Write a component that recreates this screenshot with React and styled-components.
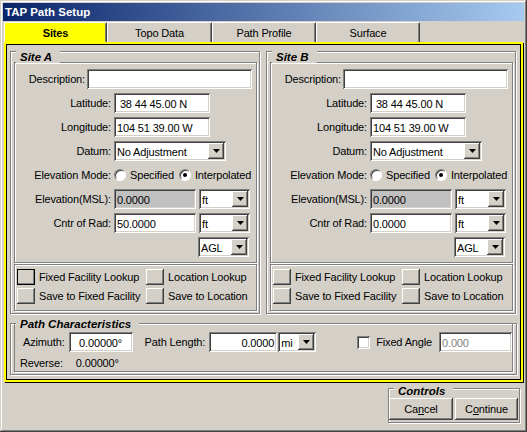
import React from 'react';
import styled, { createGlobalStyle } from 'styled-components';

const GlobalStyle = createGlobalStyle`
  body {
    margin: 0;
    font-family: "Liberation Sans", Arial, sans-serif;
    font-size: 11px;
    letter-spacing: -0.15px;
    color: #000;
    background: #d4d0c8;
  }
`

const raised = `
  box-shadow: inset -1px -1px #404040, inset 1px 1px #fff, inset -2px -2px #808080, inset 2px 2px #d4d0c8;
`

const sunken = `
  box-shadow: inset 1px 1px #808080, inset -1px -1px #fff, inset 2px 2px #404040, inset -2px -2px #d4d0c8;
`

const Window = styled.div`
  box-sizing: border-box;
  width: 527px;
  height: 432px;
  padding: 3px;
  background: #d4d0c8;
  display: flex;
  flex-direction: column;
  box-shadow: inset -1px -1px #404040, inset 1px 1px #d4d0c8, inset -2px -2px #808080, inset 2px 2px #fff;
`

const TitleBar = styled.div`
  height: 18px;
  padding-left: 2px;
  display: flex;
  align-items: center;
  background: linear-gradient(to right, #0a246a, #a6caf0);
  color: #fff;
  font-weight: bold;
  font-size: 11.5px;
  letter-spacing: 0;
`

const TabBar = styled.div`
  display: flex;
  height: 20px;
  margin-top: 1px;
  padding-left: 1px;
`

const Tab = styled.div`
  box-sizing: border-box;
  width: ${p => p.$w}px;
  height: 20px;
  padding-top: 1px;
  display: flex;
  align-items: center;
  justify-content: center;
  border-top: 1px solid #fff;
  border-left: 1px solid #fff;
  border-right: 1px solid #404040;
  border-radius: 2px 2px 0 0;
  box-shadow: inset -1px 0 #808080;
  background: ${p => p.$active ? '#ffff00' : '#d4d0c8'};
  font-weight: ${p => p.$active ? 'bold' : 'normal'};
`

const Panel = styled.div`
  box-sizing: border-box;
  height: 340px;
  margin: 0 1px 0 1px;
  padding: 7px 3px 0 4px;
  border: 2px solid #ffff00;
  box-shadow: inset 0 0 0 1px #000, 1px 1px 0 #000;
  display: flex;
  flex-direction: column;
`

const SitesRow = styled.div`
  display: flex;
  gap: 6px;
`

const Group = styled.div`
  position: relative;
  box-sizing: border-box;
  width: ${p => p.$w ? p.$w + 'px' : 'auto'};
  border: 1px solid #808080;
  box-shadow: inset 1px 1px #fff, 1px 1px #fff;
`

const SiteGroup = styled(Group)`
  padding: 10px 2px 2px 3px;
`

const Legend = styled.span`
  position: absolute;
  left: 5px;
  top: ${p => p.$top}px;
  padding: 0 8px 0 4px;
  background: #d4d0c8;
  line-height: 12px;
  font-size: 11.5px;
  font-weight: bold;
  font-style: italic;
  letter-spacing: 0;
  white-space: nowrap;
`

const Frame = styled.div`
  box-sizing: border-box;
  border: 1px solid #808080;
  box-shadow: inset 1px 1px #fff, 1px 1px #fff;
`

const FieldsFrame = styled(Frame)`
  height: 201px;
  padding-top: 6px;
  display: flex;
  flex-direction: column;
  gap: 4px;
`

const Row = styled.div`
  display: grid;
  grid-template-columns: ${p => p.$cols || '96px auto'};
  column-gap: ${p => p.$gap || 3}px;
  align-items: center;
  height: 20px;
`

const Label = styled.span`
  text-align: right;
  white-space: nowrap;
`

const Cell = styled.div`
  display: flex;
  align-items: center;
  gap: 3px;
  width: ${p => p.$w ? p.$w + 'px' : 'auto'};
  justify-content: ${p => p.$end ? 'flex-end' : 'flex-start'};
`

const Field = styled.div`
  box-sizing: border-box;
  width: ${p => p.$w}px;
  height: 20px;
  padding: 1px 3px 0 3px;
  display: flex;
  align-items: center;
  justify-content: ${p => p.$align || 'flex-start'};
  background: ${p => p.$disabled ? '#c0c0c0' : '#fff'};
  color: ${p => p.$muted ? '#808080' : '#000'};
  white-space: pre;
  ${sunken}
`

const SelectBox = styled(Field)`
  padding: 0 2px 0 3px;
`

const SelectText = styled.span`
  padding-top: 2px;
`

const DropButton = styled.span`
  box-sizing: border-box;
  width: 16px;
  height: 16px;
  margin-left: auto;
  display: flex;
  align-items: center;
  justify-content: center;
  background: #d4d0c8;
  ${raised}
`

const RadioGroup = styled.div`
  display: flex;
  align-items: center;
`

const Radio = styled.span`
  position: relative;
  box-sizing: border-box;
  width: 12px;
  height: 12px;
  margin-right: 4px;
  border-radius: 50%;
  background: #fff;
  border: 1px solid;
  border-color: #808080 #fff #fff #808080;
  box-shadow: inset 1px 1px #404040, 0 0 0 0.5px #d4d0c8;

  &::after {
    content: '';
    display: ${p => p.$checked ? 'block' : 'none'};
    position: absolute;
    left: 3px;
    top: 3px;
    width: 4px;
    height: 4px;
    border-radius: 50%;
    background: #000;
  }
`

const RadioLabel = styled.span`
  margin-right: 5px;
`

const ButtonsFrame = styled(Frame)`
  margin-top: 1px;
  padding: 4px 0 6px 2px;
  display: grid;
  grid-template-columns: 129px auto;
  row-gap: 3px;
`

const Lookup = styled.div`
  display: flex;
  align-items: center;
  gap: 4px;
  height: 16px;
  white-space: nowrap;
`

const SquareButton = styled.span`
  box-sizing: border-box;
  width: 18px;
  height: 16px;
  background: #d4d0c8;
  ${raised}
  outline: ${p => p.$focused ? '1px solid #000' : 'none'};
  outline-offset: -1px;
`

const PathGroup = styled(Group)`
  margin-top: 9px;
  padding: 0 3px 2px 3px;
`

const PathInner = styled.div`
  box-sizing: border-box;
  border: 1px solid #808080;
  border-top: none;
  box-shadow: 1px 1px #fff;
  padding: 8px 0 1px 0;
  display: flex;
  flex-direction: column;
  gap: 4px;
`

const PathRow = styled.div`
  display: flex;
  align-items: center;
  height: ${p => p.$h}px;
  padding-left: ${p => p.$pl}px;
  white-space: nowrap;
`

const Spacer = styled.span`
  width: ${p => p.$w}px;
  flex: none;
`

const CheckBox = styled.span`
  box-sizing: border-box;
  width: 13px;
  height: 13px;
  background: #fff;
  ${sunken}
`

const Footer = styled.div`
  flex: 1;
  display: flex;
  justify-content: flex-end;
  align-items: flex-start;
  padding: 6px 4px 0 0;
`

const ControlsGroup = styled(Group)`
  padding: 9px 1px 2px 0;
  display: flex;
  gap: 2px;
`

const PushButton = styled.div`
  box-sizing: border-box;
  width: ${p => p.$w}px;
  height: 22px;
  display: flex;
  align-items: center;
  justify-content: center;
  background: #d4d0c8;
  ${raised}
`

function Arrow() {
  return (
    <svg width="7" height="4" viewBox="0 0 7 4">
      <polygon points="0,0 7,0 3.5,4" fill="#000" />
    </svg>
  )
}

function Select({ w, value }) {
  return (
    <SelectBox $w={w}>
      <SelectText>{value}</SelectText>
      <DropButton><Arrow /></DropButton>
    </SelectBox>
  )
}

function Site({ title, cntr, focused }) {
  return (
    <SiteGroup $w={250}>
      <Legend $top={-1}>{title}</Legend>
      <FieldsFrame>
        <Row $cols="70px 165px" $gap={2}>
          <Label>Description:</Label>
          <Field $w={165} />
        </Row>
        <Row>
          <Label>Latitude:</Label>
          <Cell><Field $w={96}>{' 38 44 45.00 N'}</Field></Cell>
        </Row>
        <Row>
          <Label>Longitude:</Label>
          <Cell><Field $w={96}>104 51 39.00 W</Field></Cell>
        </Row>
        <Row>
          <Label>Datum:</Label>
          <Cell><Select w={112} value="No Adjustment" /></Cell>
        </Row>
        <Row>
          <Label>Elevation Mode:</Label>
          <RadioGroup>
            <Radio />
            <RadioLabel>Specified</RadioLabel>
            <Radio $checked />
            <RadioLabel>Interpolated</RadioLabel>
          </RadioGroup>
        </Row>
        <Row>
          <Label>Elevation(MSL):</Label>
          <Cell>
            <Field $w={82} $disabled>0.0000</Field>
            <Select w={51} value="ft" />
          </Cell>
        </Row>
        <Row>
          <Label>Cntr of Rad:</Label>
          <Cell>
            <Field $w={82}>{cntr}</Field>
            <Select w={51} value="ft" />
          </Cell>
        </Row>
        <Row>
          <Label />
          <Cell $w={135} $end>
            <Select w={51} value="AGL" />
          </Cell>
        </Row>
      </FieldsFrame>
      <ButtonsFrame>
        <Lookup><SquareButton $focused={focused} />Fixed Facility Lookup</Lookup>
        <Lookup><SquareButton />Location Lookup</Lookup>
        <Lookup><SquareButton />Save to Fixed Facility</Lookup>
        <Lookup><SquareButton />Save to Location</Lookup>
      </ButtonsFrame>
    </SiteGroup>
  )
}

const tabs = [
  { label: 'Sites', w: 103, active: true },
  { label: 'Topo Data', w: 105 },
  { label: 'Path Profile', w: 104 },
  { label: 'Surface', w: 104 },
]

export default function App() {
  return (
    <>
      <GlobalStyle />
      <Window>
        <TitleBar>TAP Path Setup</TitleBar>
        <TabBar>
          {tabs.map(t => (
            <Tab key={t.label} $w={t.w} $active={t.active}>{t.label}</Tab>
          ))}
        </TabBar>
        <Panel>
          <SitesRow>
            <Site title="Site A" cntr="50.0000" focused />
            <Site title="Site B" cntr="0.0000" />
          </SitesRow>
          <PathGroup $w={507}>
            <Legend $top={-6}>Path Characteristics</Legend>
            <PathInner>
              <PathRow $h={20} $pl={8}>
                <span>Azimuth:</span>
                <Spacer $w={4} />
                <Field $w={64} $align="center">0.00000°</Field>
                <Spacer $w={12} />
                <span>Path Length:</span>
                <Spacer $w={4} />
                <Field $w={68} $align="flex-end">0.0000</Field>
                <Spacer $w={1} />
                <Select w={38} value="mi" />
                <Spacer $w={41} />
                <CheckBox />
                <Spacer $w={6} />
                <span>Fixed Angle</span>
                <Spacer $w={7} />
                <Field $w={73} $muted>0.000</Field>
              </PathRow>
              <PathRow $h={14} $pl={5}>
                <span>Reverse:</span>
                <Spacer $w={13} />
                <span>0.00000°</span>
              </PathRow>
            </PathInner>
          </PathGroup>
        </Panel>
        <Footer>
          <ControlsGroup>
            <Legend $top={-4}>Controls</Legend>
            <PushButton $w={64}><span>Ca<u>n</u>cel</span></PushButton>
            <PushButton $w={63}><span>C<u>o</u>ntinue</span></PushButton>
          </ControlsGroup>
        </Footer>
      </Window>
    </>
  )
}
